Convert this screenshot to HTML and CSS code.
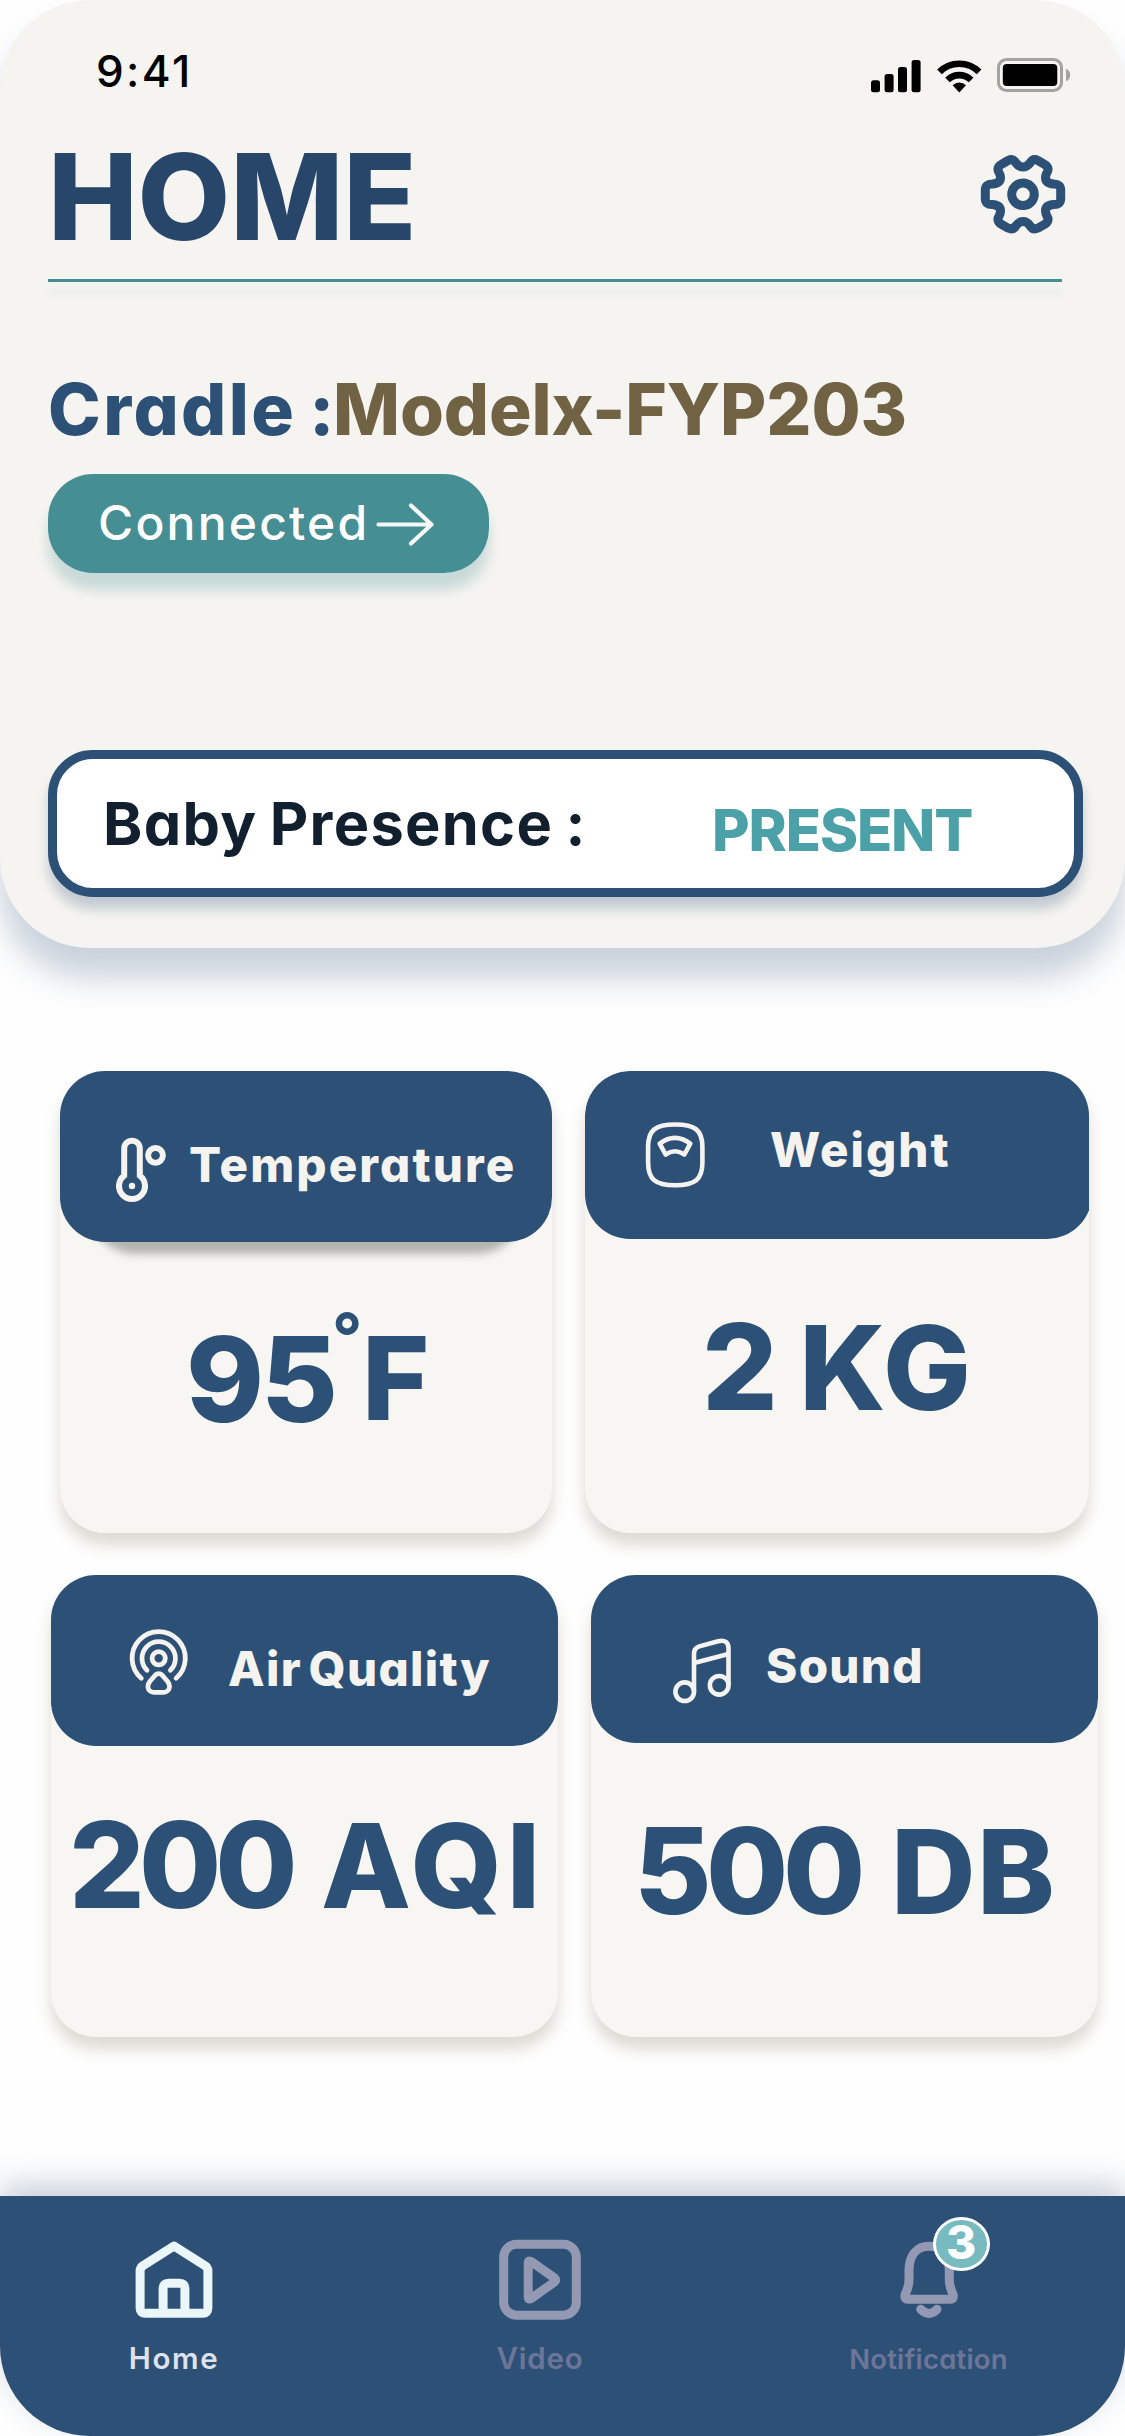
FILE: index.html
```html
<!DOCTYPE html>
<html lang="en">
<head>
<meta charset="utf-8">
<title>Home</title>
<link rel="stylesheet" href="styles.css">
</head>
<body>
<main class="screen">
  <section class="hero">
    <div class="status">
      <span class="status-time">9:41</span>
      <svg class="status-signal" width="50" height="33" viewBox="0 0 50 33">
        <rect x="0" y="20.3" width="9" height="12" rx="2.5"/><rect x="13.6" y="14" width="9" height="18.3" rx="2.5"/><rect x="27" y="7" width="9" height="25.3" rx="2.5"/><rect x="40.6" y="0" width="9" height="32.3" rx="2.5"/>
      </svg>
      <svg class="status-wifi" width="45" height="33" viewBox="0 0 45 33">
        <path d="M2.5 11.9A28.2 28.2 0 0 1 42.1 11.9M10.5 20A16.8 16.8 0 0 1 34.1 20" fill="none" stroke="#000" stroke-width="6.6"/>
        <path d="M15.6 25.2A9.6 9.6 0 0 1 29 25.2L22.3 32.6Z"/>
      </svg>
      <svg class="status-battery" width="74" height="34" viewBox="0 0 74 34">
        <rect x="1.5" y="1.5" width="63" height="31" rx="8" fill="none" stroke="#a3a29f" stroke-width="3"/>
        <rect x="5.8" y="6" width="54.5" height="22" rx="4"/>
        <path d="M69 10.8Q73.2 12.5 73.2 17T69 23.2Z" fill="#a3a29f"/>
      </svg>
    </div>

    <header class="title-row">
      <h1 class="title">HOME</h1>
      <svg class="gear" width="86" height="81" viewBox="0 0 86 81" fill="none" stroke="#2d5076" stroke-width="9">
        <path d="M5.3 36Q5.3 30 12 30Q20.5 29.5 20.5 23.5Q20.5 21 19 18.5Q16 13.500 21.500 10.300L28 6.500Q33 4 36 9Q39 13 43 13Q47 13 50 9Q53 4 58 6.500L64.500 10.300Q70 13.500 67 18.500Q65.500 21 65.500 23.500Q65.500 29.500 74 30Q80.700 30 80.700 36V44.600Q80.700 50.600 74 50.600Q65.500 51.100 65.500 57.100Q65.500 59.600 67 62.100Q70 67.100 64.500 70.300L58 74.100Q53 76.600 50 71.600Q47 67.600 43 67.600Q39 67.600 36 71.600Q33 76.600 28 74.100L21.500 70.300Q16 67.100 19 62.100Q20.500 59.600 20.500 57.100Q20.500 51.100 12 50.600Q5.300 50.600 5.300 44.600Z"/>
        <circle cx="43" cy="40.3" r="11.3"/>
      </svg>
    </header>
    <div class="rule"></div>

    <div class="cradle"><span class="cradle-label">Cradle :</span><span class="cradle-model">Modelx-FYP203</span></div>

    <div class="pill">
      <span class="pill-text">Connected</span>
      <svg class="pill-arrow" width="58" height="43" viewBox="0 0 58 43" fill="none" stroke="#f7f7f4" stroke-width="4.200" stroke-linecap="round" stroke-linejoin="round"><path d="M2.500 21.500H55M35 2.500L55.500 21.500L35 40.500"/></svg>
    </div>

    <div class="presence">
      <span class="presence-label">Baby Presence :</span>
      <span class="presence-value">PRESENT</span>
    </div>
  </section>

  <section class="cards">
    <div class="card-row card-row-top">
      <article class="card card-temp">
        <div class="card-head">
          <svg class="card-icon" width="50" height="66" viewBox="0 0 50 66" fill="none" stroke="#f5f3f0" stroke-width="6">
            <path d="M8.200 38.600V11.500a7.800 7.800 0 0 1 15.600 0V38.600a13 13 0 1 1 -15.600 0Z"/>
            <circle cx="39.500" cy="18.300" r="7.400"/><circle cx="16" cy="49" r="3.200" fill="#f5f3f0" stroke="none"/>
          </svg>
          <h2 class="card-name">Temperature</h2>
        </div>
        <div class="card-value"><span class="digits">95</span><span class="degree">°</span><span class="unit">F</span></div>
      </article>

      <article class="card card-weight">
        <div class="card-head">
          <svg class="card-icon" width="61" height="68" viewBox="0 0 61 68" fill="none" stroke="#f5f3f0" stroke-width="4.600" stroke-linejoin="round">
            <path d="M30.200 3.500C50 3.500 57.400 9 57.400 26V41.500C57.400 58.500 50 64.200 30.200 64.200S3.100 58.500 3.100 41.500V26C3.100 9 10.400 3.500 30.200 3.500Z"/>
            <path d="M14.700 22.700Q30 11 45.300 22.700L39.400 33.500Q30 27 20.600 33.500Z"/>
          </svg>
          <h2 class="card-name">Weight</h2>
        </div>
        <div class="card-value"><span class="num">2</span> KG</div>
      </article>
    </div>

    <div class="card-row card-row-bottom">
      <article class="card card-air">
        <div class="card-head">
          <svg class="card-icon" width="60" height="68" viewBox="0 0 60 68" fill="none" stroke="#f5f3f0" stroke-width="4.800" stroke-linecap="round" stroke-linejoin="round">
            <path d="M12.300 50.300A26.600 26.600 0 1 1 47.100 50.300M18 42.300A16.700 16.700 0 1 1 41.400 42.300"/>
            <circle cx="29.700" cy="30.300" r="6.600"/>
            <path d="M26.200 47.200a5 5 0 0 1 7 0L38.600 53.500Q40.500 56 40.500 58.500A5.800 5.800 0 0 1 34.700 64.300H24.700A5.800 5.800 0 0 1 18.900 58.500Q18.900 56 20.800 53.500Z"/>
          </svg>
          <h2 class="card-name">Air Quality</h2>
        </div>
        <div class="card-value"><span class="num">200</span> AQI</div>
      </article>

      <article class="card card-sound">
        <div class="card-head">
          <svg class="card-icon" width="60" height="68" viewBox="0 0 60 68" fill="none" stroke="#f5f3f0" stroke-width="4.600">
            <circle cx="12.700" cy="54.700" r="9.300"/><circle cx="47.200" cy="48.300" r="9.300"/>
            <path d="M22 54.700V17Q22 11 27.300 9.400L46 4.200Q56.500 2 56.500 11.500V48.300M22 26L56.500 17"/>
          </svg>
          <h2 class="card-name">Sound</h2>
        </div>
        <div class="card-value"><span class="num">500</span> DB</div>
      </article>
    </div>
  </section>

  <nav class="tabs">
    <a class="tab tab-home">
      <svg class="tab-icon" width="78" height="79" viewBox="0 0 78 79" fill="none" stroke="#eaf6f8" stroke-width="9" stroke-linejoin="round">
        <path d="M5.100 68V31Q5.100 28 7.500 26L39 6L70.500 26Q72.900 28 72.900 31V68Q72.900 73.200 67.500 73.200H10.500Q5.100 73.200 5.100 68Z"/>
        <path d="M28.100 73V48.500Q28.100 43.200 33.500 43.200H44.500Q49.900 43.200 49.900 48.500V73"/>
      </svg>
      <span class="tab-label">Home</span>
    </a>
    <a class="tab tab-video">
      <svg class="tab-icon" width="82" height="82" viewBox="0 0 82 82" fill="none" stroke="#9399b3" stroke-width="9" stroke-linejoin="round">
        <rect x="4.700" y="5.200" width="72.600" height="71" rx="13"/>
        <path d="M29.200 24.500Q29.200 20.500 32.500 22.800L55.500 39Q58 41 55.500 43L32.500 59.200Q29.200 61.500 29.200 57.500Z"/>
      </svg>
      <span class="tab-label">Video</span>
    </a>
    <a class="tab tab-bell">
      <span class="bell">
        <svg class="tab-icon" width="58" height="79" viewBox="0 0 58 79" fill="none" stroke="#9399b3" stroke-width="9" stroke-linejoin="round" stroke-linecap="round">
          <path d="M9 31C9 16 16 6.300 29.200 6.300S49.300 16 49.300 31V40C49.300 49 53.400 53.500 53.400 56Q53.400 59.300 50.500 59.300H7.800Q4.800 59.300 4.800 56C4.800 53.500 9 49 9 40Z"/>
          <path d="M20.700 69.300Q29 77.500 37 69.300"/>
        </svg>
        <span class="badge">3</span>
      </span>
      <span class="tab-label">Notification</span>
    </a>
  </nav>
</main>
</body>
</html>
```
FILE: styles.css
```css
* { box-sizing: border-box; }

body {
  margin: 0;
  background: #fefefe;
  font-family: Inter, "Open Sans", sans-serif;
  font-feature-settings: "cv11";
  font-weight: 800;
  line-height: 1;
  white-space: nowrap;
}

h1, h2 { margin: 0; font-weight: 800; }
svg { display: block; flex: none; }

.screen {
  display: flex;
  flex-direction: column;
  width: 1125px;
  height: 2436px;
  overflow: hidden;
}

/* Top panel */
.hero {
  height: 948px;
  flex: none;
  padding-left: 48px;
  border-radius: 90px;
  background: #f5f4f0;
  box-shadow: 0 30px 32px rgba(45, 80, 118, .25);
}

.status { display: flex; height: 136px; padding-left: 48px; }
.status-time {
  width: 775px;
  margin-top: 49px;
  font-size: 44px;
  font-weight: 550;
  letter-spacing: 2.4px;
}
.status-signal { margin-top: 60px; }
.status-wifi { margin: 60px 15px 0 16px; }
.status-battery { margin-top: 58px; }

.title-row { display: flex; justify-content: space-between; height: 143px; padding-right: 59px; }
.title { margin-top: 1px; font-size: 120px; letter-spacing: -.2px; color: #284669; }
.gear { margin-top: 18px; }

.rule {
  width: 1014px;
  height: 3px;
  background: #448e94;
  box-shadow: 0 12px 9px rgba(68, 142, 148, .12);
}

.cradle { display: flex; margin-top: 92px; font-size: 71px; }
.cradle-label { width: 285px; letter-spacing: 2.4px; word-spacing: -5px; color: #2d5076; }
.cradle-model { letter-spacing: -.1px; color: #716244; }

.pill {
  display: flex;
  width: 441px;
  height: 99px;
  margin-top: 29px;
  padding: 25px 0 0 50px;
  border-radius: 45px;
  background: #448e94;
  box-shadow: 0 17px 12px rgba(68, 142, 148, .25);
}
.pill-text { width: 278px; font-size: 48px; font-weight: 540; letter-spacing: 2.2px; color: #fff; }
.pill-arrow { margin-top: 4px; }

.presence {
  display: flex;
  width: 1035px;
  height: 147px;
  margin-top: 177px;
  padding: 35px 0 0 46px;
  border: 9px solid #2d5076;
  border-radius: 45px;
  background: #fff;
  box-shadow: 0 12px 12px rgba(45, 80, 118, .25);
}
.presence-label { width: 609px; font-size: 59.5px; font-weight: 680; letter-spacing: 1.3px; word-spacing: -3px; color: #111f2f; }
.presence-value { margin-top: 8px; font-size: 57.8px; font-weight: 760; letter-spacing: -1.1px; color: #4ca1a8; }

/* Metric cards */
.cards { flex: none; height: 1248px; padding-top: 123px; }
.card-row { display: flex; }
.card-row-top { gap: 33px; padding-left: 60px; }
.card-row-bottom { gap: 33px; margin-top: 42px; padding-left: 51px; }

.card {
  position: relative;
  z-index: 0;
  width: 507px;
  height: 462px;
  border-radius: 45px;
  background: #f7f6f2;
  box-shadow: 0 12px 15px rgba(105, 90, 55, .22);
}
.card-head { display: flex; height: 168px; border-radius: 45px; background: #2d5076; }
.card-name { font-size: 47.5px; color: #f5f3f0; }
.card-value { font-size: 117px; color: #2d5076; }
.num { font-size: 119px; line-height: 0; }

.card-temp { width: 492px; }
.card-temp .card-head { height: 171px; padding: 66px 0 0 56px; }
/* soft shadow cast by the header onto the card */
.card-temp::before {
  content: "";
  position: absolute;
  z-index: -1;
  top: 90px;
  left: 30px;
  right: 30px;
  height: 93px;
  border-radius: 45px;
  background: rgba(0, 0, 0, .27);
  filter: blur(4px);
}
.card-temp .card-name { margin: 4px 0 0 23px; letter-spacing: 2.1px; }
.card-temp .card-value { display: flex; padding: 78px 0 0 126px; }
.digits { width: 146px; font-size: 118px; letter-spacing: -3px; }
.degree { width: 30px; margin-top: -17px; font-size: 66px; font-weight: 700; }
.unit { margin-top: 1px; font-size: 115px; font-weight: 760; }

.card-weight { width: 504px; overflow: hidden; }
.card-weight .card-head { width: 507px; padding: 50px 0 0 60px; }
.card-weight .card-name { margin: 5px 0 0 64px; letter-spacing: 2px; }
.card-weight .card-value { padding: 70px 0 0 117px; word-spacing: -9px; letter-spacing: 2.4px; }

.card-air .card-head { height: 171px; padding: 53px 0 0 78px; }
.card-air .card-name { margin: 17px 0 0 39px; letter-spacing: 1.3px; word-spacing: -5px; }
.card-air .card-value { padding: 61px 0 0 18px; letter-spacing: 4.8px; word-spacing: -1px; }
.card-air .num { letter-spacing: -6px; }

.card-sound .card-head { padding: 62px 0 0 81px; }
.card-sound .card-name { margin: 5px 0 0 34px; letter-spacing: 1.3px; }
.card-sound .card-value { padding: 70px 0 0 43px; letter-spacing: 1.6px; word-spacing: 4px; }
.card-sound .num { letter-spacing: -5.5px; }

/* Bottom navigation */
.tabs {
  display: grid;
  grid-template-columns: 348px 384px 393px;
  flex: none;
  height: 240px;
  border-radius: 0 0 90px 90px;
  background: #2d5076;
  box-shadow: 0 -12px 30px rgba(45, 80, 118, .25);
}
.tab { display: grid; grid-template-rows: 148px auto; justify-items: center; align-content: start; }
.tab-icon { margin-top: 44px; }
.tab-video .tab-icon { margin-top: 43px; }
.tab-label { font-size: 29.5px; font-weight: 600; color: #6d7699; }
.tab-home .tab-label { letter-spacing: 1.6px; color: #dde2ec; }
.tab-video .tab-label { letter-spacing: .8px; }
.tab-bell .tab-label { margin-top: 2px; font-size: 27.5px; letter-spacing: .2px; }
.bell { position: relative; }
.badge {
  position: absolute;
  top: 21px;
  left: 33px;
  width: 57px;
  height: 54px;
  border: 3px solid #fff;
  border-radius: 50%;
  background: #77bac0;
  color: #fff;
  font-size: 46px;
  line-height: 45px;
  text-align: center;
}
```
